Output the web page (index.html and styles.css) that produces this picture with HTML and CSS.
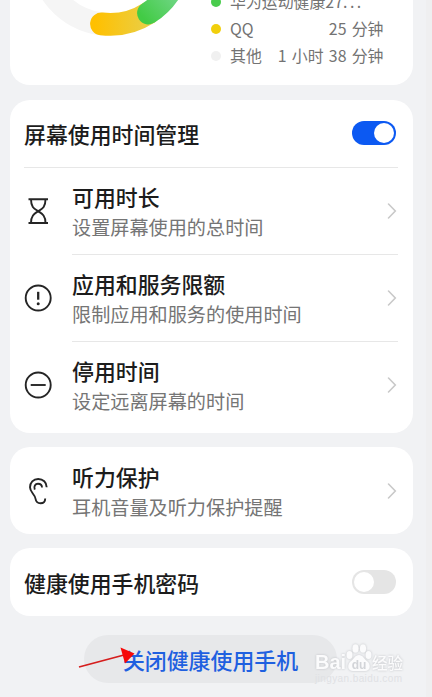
FILE: index.html
```html
<!DOCTYPE html>
<html lang="zh-CN">
<head>
<meta charset="utf-8">
<title>健康使用手机</title>
<link rel="stylesheet" href="styles.css">
</head>
<body>
<main class="screen">
  <section class="card usage">
    <svg class="ring" width="180" height="40" viewBox="0 0 180 40" fill="none">
      <defs>
        <linearGradient id="yellow" gradientUnits="userSpaceOnUse" x1="95" y1="0" x2="150" y2="0"><stop offset="0" stop-color="#ffc000"/><stop offset="1" stop-color="#e9cf48"/></linearGradient>
        <linearGradient id="green" gradientUnits="userSpaceOnUse" x1="145" y1="20" x2="172" y2="-4"><stop offset="0" stop-color="#42cb45"/><stop offset="1" stop-color="#6cd580"/></linearGradient>
      </defs>
      <g stroke-width="22.8" stroke-linecap="round">
        <path d="M101.500 23.900A70.800 70.800 0 0 1 39.700 -46.400" stroke="#f5f5f5"/>
        <path d="M101.500 23.900A70.800 70.800 0 0 0 148.500 13" stroke="url(#yellow)"/>
        <path d="M148.500 13A70.800 70.800 0 0 0 181 -41" stroke="url(#green)"/>
      </g>
    </svg>
    <ul class="legend">
      <li><i class="dot green"></i><span>华为运动健康27<span class="dots">...</span></span></li>
      <li><i class="dot yellow"></i><span>QQ</span><span class="time">25 分钟</span></li>
      <li><i class="dot gray"></i><span>其他</span><span class="time">1 小时 38 分钟</span></li>
    </ul>
  </section>

  <section class="card manage">
    <header class="head">
      <h2>屏幕使用时间管理</h2>
      <span class="switch on"></span>
    </header>
    <div class="row">
      <svg class="icon" viewBox="0 0 28 28"><path d="M4.500 2.300H24M4.500 26H24M7 2.300C7 11 11 12 14.200 14.200C17.500 16.400 21.500 18 21.500 26M21.500 2.300C21.500 11 17.500 12 14.200 14.200C11 16.400 7 18 7 26"/></svg>
      <div class="body"><div class="copy"><h3>可用时长</h3><p>设置屏幕使用的总时间</p></div><svg class="chevron" viewBox="0 0 10 18"><path d="M1.500 2L8.300 9L1.500 16"/></svg></div>
    </div>
    <div class="row">
      <svg class="icon" viewBox="0 0 28 28"><circle cx="14.200" cy="14" r="12.500"/><path d="M14.200 7.800V15.700" stroke-width="2.300"/><circle class="solid" cx="14.200" cy="19.700" r="1.500"/></svg>
      <div class="body"><div class="copy"><h3>应用和服务限额</h3><p>限制应用和服务的使用时间</p></div><svg class="chevron" viewBox="0 0 10 18"><path d="M1.500 2L8.300 9L1.500 16"/></svg></div>
    </div>
    <div class="row">
      <svg class="icon" viewBox="0 0 28 28"><circle cx="14.200" cy="14" r="12.500"/><path d="M6.700 14H21.700"/></svg>
      <div class="body"><div class="copy"><h3>停用时间</h3><p>设定远离屏幕的时间</p></div><svg class="chevron" viewBox="0 0 10 18"><path d="M1.500 2L8.300 9L1.500 16"/></svg></div>
    </div>
  </section>

  <section class="card hearing">
    <div class="row">
      <svg class="icon" viewBox="0 0 28 28"><path d="M22.700 10.300C22.700 5.300 19 2 14.200 2C9.300 2 6 5.700 6 10.300C6 15.500 11 17 11.600 22C12 25 14 26.300 16.500 26.300C19.300 26.300 21.200 24.400 21.200 21.500M10.800 12.700C9.500 9.300 11.200 6.700 14 6.700C16.500 6.700 18 8.300 18 10.500"/></svg>
      <div class="body"><div class="copy"><h3>听力保护</h3><p>耳机音量及听力保护提醒</p></div><svg class="chevron" viewBox="0 0 10 18"><path d="M1.500 2L8.300 9L1.500 16"/></svg></div>
    </div>
  </section>

  <section class="card password">
    <header class="head">
      <h2>健康使用手机密码</h2>
      <span class="switch"></span>
    </header>
  </section>

  <button class="close">关闭健康使用手机</button>

  <svg class="arrow" width="58" height="24" viewBox="0 0 58 24"><path d="M1 21L46 9" stroke="#d51d1d" stroke-width="1.700"/><path d="M42.500 1.500L56.500 7.500L47 17.500Z" fill="#f60808"/></svg>

  <div class="watermark">
    <div class="brand">
      <span class="bai">Bai</span>
      <svg class="paw" width="28" height="30" viewBox="0 0 28 30"><ellipse cx="4.500" cy="12" rx="3" ry="4"/><ellipse cx="10.500" cy="5.500" rx="3.100" ry="4.300"/><ellipse cx="18" cy="5.500" rx="3.100" ry="4.300"/><ellipse cx="23.500" cy="12" rx="3" ry="4"/><path d="M14 12C10 12 9 16 6 18C2 21 2 28 8 28H20C26 28 26 21 22 18C19 16 18 12 14 12Z"/><text x="14" y="26" text-anchor="middle">du</text></svg>
      <span class="jingyan">经验</span>
    </div>
    <div class="site">jingyan.baidu.com</div>
  </div>
</main>
</body>
</html>
```
FILE: styles.css
```css
* { box-sizing: border-box; margin: 0; padding: 0; }

body {
  background: #f1f2f4;
  font-family: "Noto Sans CJK SC", sans-serif;
  color: #1c1c1c;
}

.screen {
  position: relative;
  width: 432px;
  height: 697px;
  overflow: hidden;
  padding: 0 13.500px 0 9.500px;
  display: flex;
  flex-direction: column;
  border-right: 6px solid #efeff0;
}

.card {
  flex: none;
  background: #fff;
  border-radius: 20px;
  margin-bottom: 14px;
  padding: 0 14.500px;
}

.usage {
  height: 85px;
  padding: 0;
  margin-bottom: 14.500px;
  border-radius: 0 0 20px 20px;
  display: flex;
  overflow: hidden;
}
.ring { flex: none; margin-left: -9.500px; width: 180px; height: 40px; overflow: visible; }
.legend {
  list-style: none;
  width: 173px;
  margin-left: 30.500px;
  margin-top: -12px;
  font-size: 15.900px;
  color: #737373;
}
.legend li { display: flex; align-items: center; height: 27.300px; white-space: nowrap; }
.legend li:not(:first-child) > span { position: relative; top: -.8px; }
.dots { letter-spacing: 2.500px; }
.dot { width: 10px; height: 10px; border-radius: 50%; margin-right: 9.500px; flex: none; }
.dot.green { background: #49cc4d; }
.dot.yellow { background: #f1cf0c; }
.dot.gray { background: #f0f0f0; }
.time { margin-left: auto; word-spacing: 1.700px; }

.manage { height: 333.500px; }
.hearing { height: 87px; }
.password { height: 68px; margin-bottom: 19px; }

.head { height: 67px; display: flex; align-items: center; justify-content: space-between; padding-right: 2px; }
.head h2, .row h3 { font-size: 21.900px; font-weight: 500; line-height: 32px; white-space: nowrap; }
.manage .head { height: 68px; border-bottom: 1px solid #e7e7e7; }
.manage .head h2 { padding-top: 2px; }
.password .head h2 { padding-top: 3px; }

.switch { width: 44px; height: 24px; border-radius: 12px; background: #e5e5e5; padding: 2px; display: flex; }
.switch::before { content: ""; width: 20px; height: 20px; border-radius: 50%; background: #fff; }
.switch.on { background: #0c59f2; justify-content: flex-end; }

.row { height: 87px; display: flex; align-items: center; }
.icon { width: 28px; height: 28px; margin-right: 20px; flex: none; fill: none; stroke: #252525; stroke-width: 1.900; }
.icon .solid { fill: #252525; stroke: none; }
.body { flex: 1; height: 87px; display: flex; align-items: center; justify-content: space-between; padding-right: 1.500px; }
.manage .row:not(:last-child) .body { border-bottom: 1px solid #e7e7e7; }
.copy p { font-size: 19.150px; line-height: 28px; color: #757575; white-space: nowrap; }
.chevron { width: 10px; height: 18px; fill: none; stroke: #c9c9c9; stroke-width: 1.600; stroke-linecap: round; }

.close {
  flex: none;
  width: 253px;
  height: 48px;
  margin-left: 74.500px;
  border: 0;
  border-radius: 24px;
  background: #e7e8ea;
  color: #1f60e0;
  font: 500 21.900px/48px "Noto Sans CJK SC", sans-serif;
  padding-top: 1px;
}

.arrow { position: absolute; left: 78px; top: 646px; }

.watermark { position: absolute; left: 315px; top: 643px; width: 92px; color: #fbfbfc; }
.brand { display: flex; height: 30px; filter: drop-shadow(0 0 1px #bfc1c5); }
.bai { font: bold 20px/39px "Liberation Sans", sans-serif; width: 30px; }
.paw { fill: #fbfbfc; flex: none; }
.paw text { font: bold 12px "Liberation Sans", sans-serif; fill: #d2d4d8; }
.jingyan { font-size: 15.500px; line-height: 38px; font-weight: 500; white-space: nowrap; margin-left: -1px; }
.site { font: 10px/11px "Liberation Sans", sans-serif; letter-spacing: .4px; color: #e0e1e4; white-space: nowrap; }
```
